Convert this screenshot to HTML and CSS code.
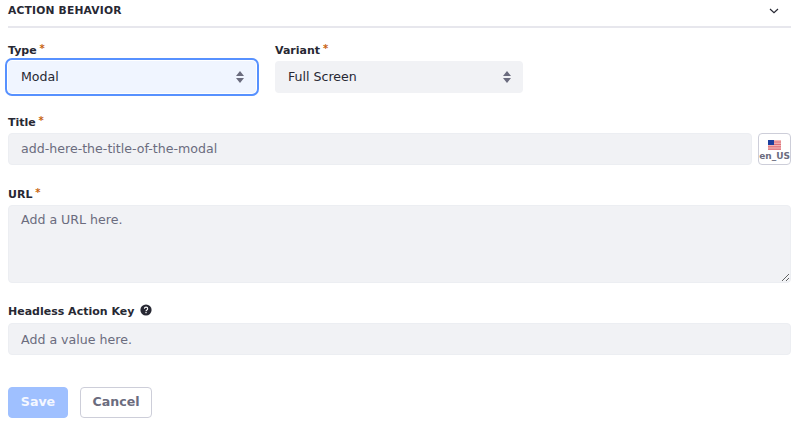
FILE: index.html
```html
<!DOCTYPE html>
<html lang="en">
<head>
    <meta charset="UTF-8">
    <title>Action Behavior</title>
    <link rel="stylesheet" href="styles.css">
</head>
<body>
<form class="sheet">
    <div class="sheet-header">
        <span class="sheet-title">ACTION BEHAVIOR</span>
        <svg class="caret" width="12" height="12" viewBox="0 0 12 12"><path d="M2 5l4 3.6L10 5" fill="none" stroke="#272833" stroke-width="1.2"/></svg>
    </div>

    <div class="row">
        <div class="field field-select">
            <label class="label">Type <span class="req">*</span></label>
            <div class="select is-focus">
                <span>Modal</span>
                <svg class="updown" width="10" height="14" viewBox="0 0 10 14"><path d="M5 1l4 5H1zM1 8h8l-4 5z" fill="#6b6c7e"/></svg>
            </div>
        </div>
        <div class="field field-select">
            <label class="label">Variant <span class="req">*</span></label>
            <div class="select">
                <span>Full Screen</span>
                <svg class="updown" width="10" height="14" viewBox="0 0 10 14"><path d="M5 1l4 5H1zM1 8h8l-4 5z" fill="#6b6c7e"/></svg>
            </div>
        </div>
    </div>

    <div class="field">
        <label class="label">Title <span class="req">*</span></label>
        <div class="input-group">
            <input class="input" type="text" placeholder="add-here-the-title-of-the-modal">
            <button class="locale" type="button">
                <svg width="13" height="10" viewBox="0 0 13 10">
                    <rect width="13" height="10" fill="#f2b5b5"/>
                    <path d="M0 2h13M0 4.400h13M0 6.800h13M0 9.200h13" stroke="#d9606b" stroke-width=".9"/>
                    <rect width="6" height="5" fill="#1d3f9e"/>
                </svg>
                <span>en_US</span>
            </button>
        </div>
    </div>

    <div class="field">
        <label class="label">URL <span class="req">*</span></label>
        <textarea class="input textarea" placeholder="Add a URL here."></textarea>
    </div>

    <div class="field">
        <label class="label">Headless Action Key
            <svg class="help" width="12" height="12" viewBox="0 0 12 12">
                <circle cx="6" cy="6" r="5.6" fill="#272833"/>
                <path d="M4.400 4.700c0-2.100 3.300-2.100 3.300 0 0 1.300-1.700 1.200-1.700 2.500" fill="none" stroke="#fff" stroke-width="1.1"/>
                <rect x="5.400" y="8" width="1.200" height="1.200" fill="#fff"/>
            </svg>
        </label>
        <input class="input input-key" type="text" placeholder="Add a value here.">
    </div>

    <div class="actions">
        <button class="btn btn-primary" type="button">Save</button>
        <button class="btn btn-secondary" type="button">Cancel</button>
    </div>
</form>
</body>
</html>
```

FILE: styles.css
```css
* {
    box-sizing: border-box;
}

body {
    margin: 0;
    background: #fff;
    color: #272833;
    font-family: "DejaVu Sans", sans-serif;
}

.sheet {
    width: 800px;
    padding: 0 9px 0 8px;
}

.sheet-header {
    display: flex;
    align-items: center;
    justify-content: space-between;
    height: 28px;
    padding: 0 11px 6px 0;
    border-bottom: 2px solid #e7e7ed;
}

.sheet-title {
    font-size: 10.7px;
    font-weight: 700;
    letter-spacing: .2px;
}

.row {
    display: flex;
    gap: 19px;
}

.field {
    margin-top: 21px;
}

.field-select {
    width: 248px;
    margin-top: 14px;
}

.label {
    display: block;
    height: 19px;
    font-size: 11px;
    font-weight: 700;
    line-height: 14px;
}

.req {
    margin-left: -1px;
    color: #c8620f;
    font-size: 10px;
    vertical-align: 2px;
}

.help {
    margin-left: 2px;
    vertical-align: -1px;
}

.select {
    display: flex;
    align-items: center;
    justify-content: space-between;
    height: 32px;
    padding: 0 11px 2px 13px;
    background: #f1f2f5;
    border-radius: 4px;
    font-size: 12.6px;
}

.updown {
    margin-top: 2px;
}

.select.is-focus {
    background: #f0f5ff;
    box-shadow: 0 0 0 1px #fff, 0 0 0 3px #5791ff;
}

.input-group {
    display: flex;
    gap: 6px;
}

.input {
    display: block;
    width: 100%;
    height: 32px;
    padding: 0 12px 1px;
    background: #f1f2f5;
    border: 1px solid #eceef2;
    border-radius: 4px;
    color: #272833;
    font-family: inherit;
    font-size: 12.6px;
}

.input-key {
    padding-bottom: 0;
}

.input::placeholder {
    color: #6b6c7e;
    opacity: 1;
}

.textarea {
    height: 78px;
    padding-top: 6px;
    resize: vertical;
}

.locale {
    display: flex;
    flex: 0 0 32px;
    flex-direction: column;
    align-items: center;
    justify-content: center;
    gap: 1px;
    height: 32px;
    padding: 3px 0 0;
    background: #fff;
    border: 1px solid #cdced9;
    border-radius: 4px;
    color: #6b6c7e;
    font-family: inherit;
    font-size: 9px;
    font-weight: 700;
}

.actions {
    display: flex;
    gap: 12px;
    margin-top: 32px;
}

.btn {
    height: 31px;
    padding: 0 0 2px;
    border-radius: 4px;
    font-family: inherit;
    font-size: 12.6px;
    font-weight: 700;
}

.btn-primary {
    width: 60px;
    background: #9fc0ff;
    border: 1px solid #9fc0ff;
    color: #f4f7ff;
}

.btn-secondary {
    width: 72px;
    background: #fff;
    border: 1px solid #cdced9;
    color: #6b6c7e;
}
```
